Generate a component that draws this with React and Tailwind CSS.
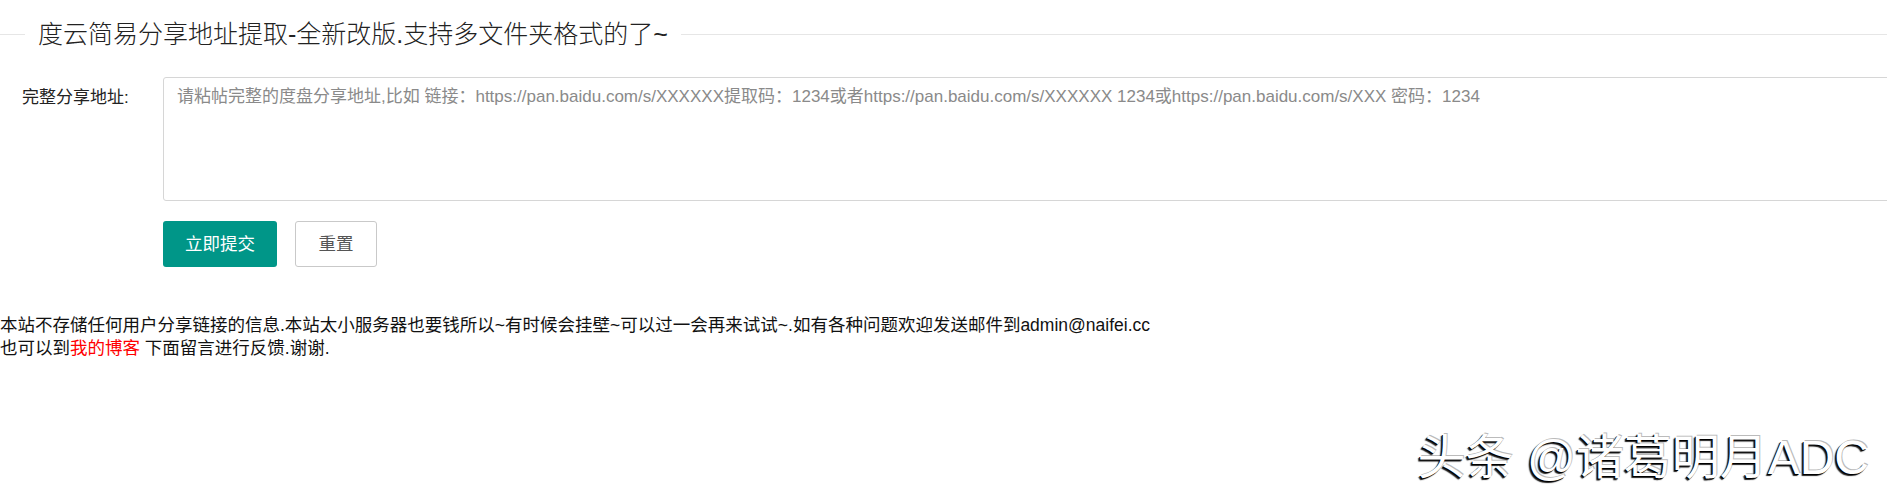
export default function App() {
  return (
    <div className="relative w-full h-[496px] overflow-hidden bg-white text-[#333] font-['Liberation_Sans','Noto_Sans_CJK_SC',sans-serif]">
      {/* fieldset title */}
      <div className="flex items-center mt-[22px] h-[24px]">
        <div className="w-[25px] h-px bg-[#e6e6e6]" />
        <span className="px-[13px] text-[25px] leading-[24px] font-light text-[#222] whitespace-nowrap">
          度云简易分享地址提取-全新改版.支持多文件夹格式的了~
        </span>
        <div className="flex-1 h-px bg-[#e6e6e6]" />
      </div>

      {/* form */}
      <div className="flex mt-[31px]">
        <label className="w-[163px] shrink-0 pl-[22px] pt-[9px] text-[17px] leading-[24px] text-[#222] whitespace-nowrap">
          完整分享地址:
        </label>
        <textarea
          className="w-[1760px] shrink-0 h-[124px] border border-[#d6d6d6] rounded-[3px] px-[13px] pt-[6px] text-[17px] leading-[25px] text-[#333] placeholder:text-[#8a8a8a] resize-none outline-none"
          placeholder="请粘帖完整的度盘分享地址,比如 链接：https://pan.baidu.com/s/XXXXXX提取码：1234或者https://pan.baidu.com/s/XXXXXX 1234或https://pan.baidu.com/s/XXX 密码：1234"
        />
      </div>

      <div className="flex gap-[18px] mt-[20px] pl-[163px]">
        <button className="h-[46px] w-[114px] rounded-[3px] bg-[#009688] text-white text-[17.5px]">
          立即提交
        </button>
        <button className="h-[46px] w-[82px] rounded-[3px] border border-[#c9c9c9] bg-white text-[#555] text-[17.5px]">
          重置
        </button>
      </div>

      {/* notice */}
      <div className="mt-[47px] text-[17.5px] leading-[23px] text-[#111]">
        <div>
          本站不存储任何用户分享链接的信息.本站太小服务器也要钱所以~有时候会挂壁~可以过一会再来试试~.如有各种问题欢迎发送邮件到admin@naifei.cc
        </div>
        <div>
          也可以到<a href="#" className="text-[#f00]">我的博客</a> 下面留言进行反馈.谢谢.
        </div>
      </div>

      {/* watermark */}
      <div className="absolute right-[18px] bottom-[12px] text-[48px] leading-[52px] text-white whitespace-nowrap [text-shadow:-1px_1px_0_#000,-2px_2px_1px_#222,1px_-1px_0_#bbb]">
        头条 @诸葛明月ADC
      </div>
    </div>
  );
}
